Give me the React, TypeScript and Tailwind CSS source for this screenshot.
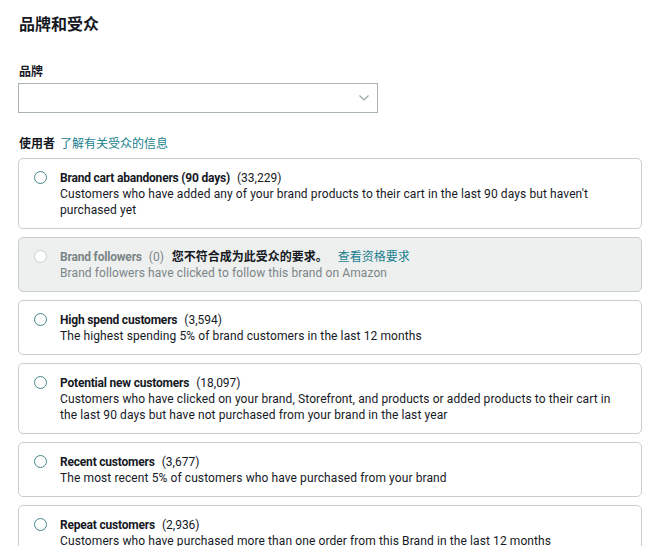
import React from "react";

type Audience = {
  name: string;
  count: string;
  desc: string;
  disabled?: boolean;
};

const audiences: Audience[] = [
  {
    name: "Brand cart abandoners (90 days)",
    count: "(33,229)",
    desc: "Customers who have added any of your brand products to their cart in the last 90 days but haven't purchased yet",
  },
  {
    name: "Brand followers",
    count: "(0)",
    desc: "Brand followers have clicked to follow this brand on Amazon",
    disabled: true,
  },
  {
    name: "High spend customers",
    count: "(3,594)",
    desc: "The highest spending 5% of brand customers in the last 12 months",
  },
  {
    name: "Potential new customers",
    count: "(18,097)",
    desc: "Customers who have clicked on your brand, Storefront, and products or added products to their cart in the last 90 days but have not purchased from your brand in the last year",
  },
  {
    name: "Recent customers",
    count: "(3,677)",
    desc: "The most recent 5% of customers who have purchased from your brand",
  },
  {
    name: "Repeat customers",
    count: "(2,936)",
    desc: "Customers who have purchased more than one order from this Brand in the last 12 months",
  },
];

const Radio = ({ disabled }: { disabled?: boolean }) => (
  <span
    className={`mt-[1px] block h-[13px] w-[13px] shrink-0 rounded-full border-[1.5px] bg-white ${
      disabled ? "border-[#c8cdcf]" : "border-[#44868d]"
    }`}
  />
);

const AudienceCard = ({ a }: { a: Audience }) => (
  <div
    className={`flex gap-[13px] rounded-[5px] border pl-[15px] pr-3 pt-[11px] pb-[10px] ${
      a.disabled ? "border-[#c9cfd0] bg-[#eef0f0]" : "border-[#c9cfd0] bg-white"
    }`}
  >
    <Radio disabled={a.disabled} />
    <div className="flex flex-col text-[12px] leading-[16px]">
      <div className="flex items-baseline">
        <span
          className={`font-bold tracking-[-0.2px] ${a.disabled ? "text-[#7b8486]" : "text-[#16191f]"}`}
        >
          {a.name}
        </span>
        <span
          className={`ml-[7px] ${a.disabled ? "text-[#7b8486]" : "text-[#16191f]"}`}
        >
          {a.count}
        </span>
        {a.disabled && (
          <>
            <span className="ml-[8px] font-bold text-[#16191f]">
              您不符合成为此受众的要求。
            </span>
            <a className="ml-[10px] text-[#1a7f8e]">查看资格要求</a>
          </>
        )}
      </div>
      <p
        className={`tracking-[0.1px] ${a.disabled ? "text-[#7b8486]" : "text-[#16191f]"}`}
      >
        {a.desc}
      </p>
    </div>
  </div>
);

export default function App() {
  return (
    <div
      className="min-h-screen bg-white pl-[18px] pr-[24px] pt-[14px] text-[#16191f]"
      style={{ fontFamily: "Roboto, 'Noto Sans CJK SC', sans-serif" }}
    >
      <h2 className="pl-[1px] text-[16px] font-bold leading-[22px]">品牌和受众</h2>

      <div className="mt-[28px] pl-[1px] text-[12px] font-bold leading-[16px]">品牌</div>
      <button className="mt-[3px] flex h-[30px] w-[360px] items-center justify-end border border-[#aab3b5] bg-white pr-[7px]">
        <svg width="12" height="8" viewBox="0 0 12 8" fill="none">
          <path d="M1.5 1.5 6 6l4.5-4.5" stroke="#9aa3a5" strokeWidth="1.2" />
        </svg>
      </button>

      <div className="mt-[23px] flex items-baseline pl-[1px] text-[12px] leading-[16px]">
        <span className="font-bold">使用者</span>
        <a className="ml-[5px] text-[#1a7f8e]">了解有关受众的信息</a>
      </div>

      <div className="mt-[6px] flex flex-col gap-[8px]">
        {audiences.map((a) => (
          <AudienceCard key={a.name} a={a} />
        ))}
      </div>
    </div>
  );
}
